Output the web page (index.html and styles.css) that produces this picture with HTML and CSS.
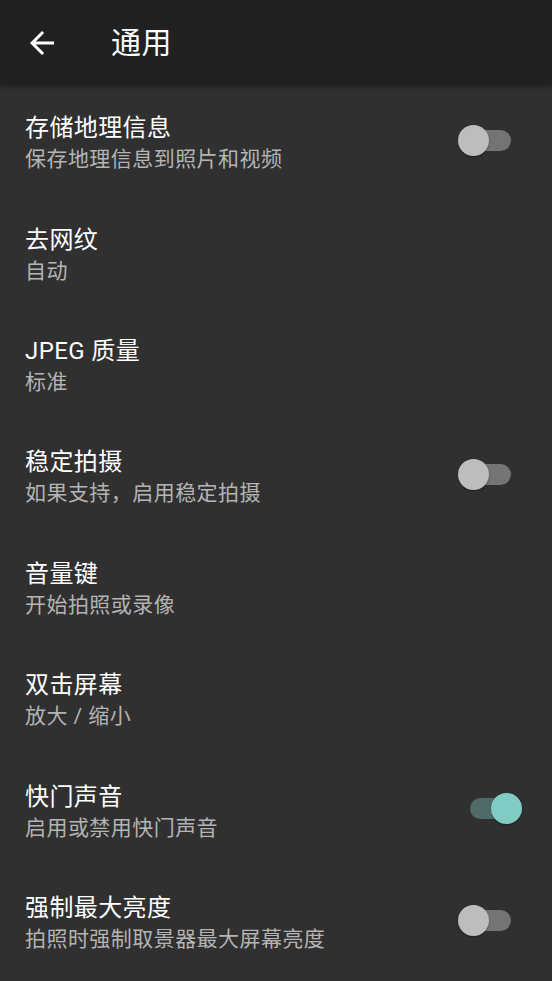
FILE: index.html
```html
<!DOCTYPE html>
<html lang="zh-CN">
<head>
<meta charset="utf-8">
<link rel="stylesheet" href="styles.css">
</head>
<body>
<div class="screen">
  <header class="appbar">
    <span class="back">
      <svg width="36" height="36" viewBox="0 0 24 24"><path d="M20 11H7.83l5.59-5.59L12 4l-8 8 8 8 1.41-1.41L7.83 13H20v-2z" fill="#fff"/></svg>
    </span>
    <h1 class="title">通用</h1>
  </header>
  <main class="list">
    <div class="row">
      <div class="text"><div class="t">存储地理信息</div><div class="s">保存地理信息到照片和视频</div></div>
      <div class="switch off"><span class="track"></span><span class="thumb"></span></div>
    </div>
    <div class="row">
      <div class="text"><div class="t">去网纹</div><div class="s">自动</div></div>
    </div>
    <div class="row">
      <div class="text"><div class="t">JPEG 质量</div><div class="s">标准</div></div>
    </div>
    <div class="row">
      <div class="text"><div class="t">稳定拍摄</div><div class="s">如果支持，启用稳定拍摄</div></div>
      <div class="switch off"><span class="track"></span><span class="thumb"></span></div>
    </div>
    <div class="row">
      <div class="text"><div class="t">音量键</div><div class="s">开始拍照或录像</div></div>
    </div>
    <div class="row">
      <div class="text"><div class="t">双击屏幕</div><div class="s">放大 / 缩小</div></div>
    </div>
    <div class="row">
      <div class="text"><div class="t">快门声音</div><div class="s">启用或禁用快门声音</div></div>
      <div class="switch on"><span class="track"></span><span class="thumb"></span></div>
    </div>
    <div class="row">
      <div class="text"><div class="t">强制最大亮度</div><div class="s">拍照时强制取景器最大屏幕亮度</div></div>
      <div class="switch off"><span class="track"></span><span class="thumb"></span></div>
    </div>
  </main>
</div>
</body>
</html>
```

FILE: styles.css
```css
* { box-sizing: border-box; }
html, body {
  margin: 0;
  padding: 0;
  background: #303030;
  height: 100%;
  overflow: hidden;
}
body {
  font-family: Roboto, "Noto Sans CJK SC", sans-serif;
  color: #fff;
}
.screen {
  width: 552px;
  height: 981px;
  display: flex;
  flex-direction: column;
}
.appbar {
  height: 85px;
  flex: none;
  background: #212121;
  display: flex;
  align-items: center;
  padding-left: 24px;
  position: relative;
  z-index: 1;
  box-shadow: 0 2px 4px rgba(0,0,0,0.35);
}
.back {
  width: 36px;
  height: 36px;
  display: flex;
}
.title {
  margin: 0 0 0 51px;
  font-size: 30px;
  font-weight: 400;
  line-height: 36px;
  letter-spacing: 0.5px;
  color: #fff;
}
.list {
  display: flex;
  flex-direction: column;
}
.row {
  height: 111.43px;
  flex: none;
  display: flex;
  align-items: center;
  padding: 0 30px 0 25px;
}
.text {
  flex: 1;
  display: flex;
  flex-direction: column;
  margin-top: 5px;
}
.t {
  font-size: 24px;
  line-height: 32px;
  letter-spacing: 0.4px;
  color: #fff;
}
.s {
  font-size: 21px;
  line-height: 30px;
  letter-spacing: 0.45px;
  color: #b4b4b4;
}
.switch {
  position: relative;
  width: 64px;
  height: 32px;
  flex: none;
}
.track {
  position: absolute;
  top: 5px;
  width: 51px;
  height: 21px;
  border-radius: 11px;
}
.thumb {
  position: absolute;
  top: 0;
  width: 31px;
  height: 31px;
  border-radius: 50%;
  box-shadow: 0 1px 2px rgba(0,0,0,0.4);
}
.switch.off .track { left: 2px; background: #747474; }
.switch.off .thumb { left: 0; background: #bdbdbd; }
.switch.on .track { left: 12px; background: #4f6a67; }
.switch.on .thumb { right: 0; background: #80cbc4; }
```
